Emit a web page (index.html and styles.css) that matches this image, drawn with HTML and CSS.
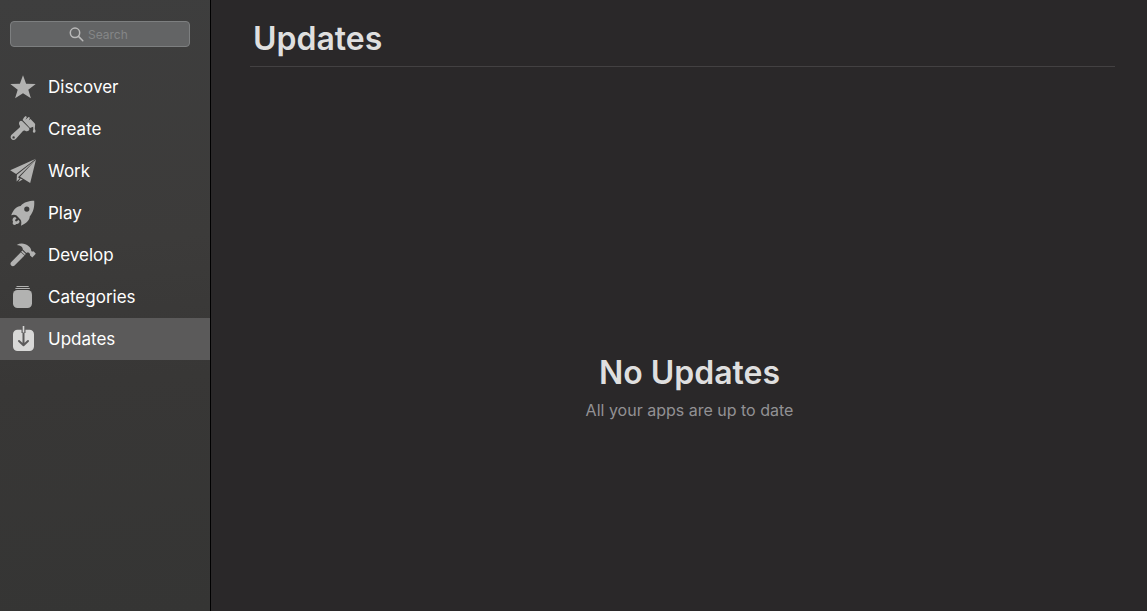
FILE: index.html
```html
<!DOCTYPE html>
<html lang="en">
<head>
<meta charset="utf-8">
<meta name="viewport" content="width=device-width, initial-scale=1">
<title>Updates</title>
<link rel="stylesheet" href="styles.css">
</head>
<body>
<div class="app">
  <aside class="sidebar">
    <label class="search">
      <svg class="search-icon" viewBox="0 0 15 15" aria-hidden="true"><circle cx="6" cy="5.800" r="4.700"/><path d="M9.500 9.400l4.300 4.300"/></svg>
      <input class="search-input" type="search" placeholder="Search" aria-label="Search">
    </label>
    <nav class="nav">
      <a class="nav-item" href="#discover">
        <svg class="nav-icon" viewBox="0 0 30 30" aria-hidden="true"><path d="M15 3.3l3.1 8.500 9.600.2-7.400 5.700 2.600 8.600-7.900-5.100-7.900 5.100 2.600-8.600L2.300 12l9.600-.2z"/></svg>
        Discover
      </a>
      <a class="nav-item" href="#create">
        <svg class="nav-icon" viewBox="0 0 30 30" aria-hidden="true"><path fill-rule="evenodd" d="M11.600 7.500c.7-.9 1.900-.9 2.700-.2l6.500 6.500c.8.8.8 2 0 2.800-1.100 1-2.500.9-3.600.2-.9-.5-1.800-.4-2.500.4l-6.900 7.700c-1.300 1.300-3.300 1.400-4.400.2s-1-3.100.2-4.300l7.800-7c.8-.8.8-1.600.3-2.400-.8-1.300-1-2.800-.1-3.900zM5.600 22.200a1.200 1.200 0 1 0 0 2.400 1.200 1.200 0 0 0 0-2.400z"/><path d="M14.600 6.100c.8-1.400 1-2.700 3.100-4l1.200.9-1.500 2.800L20.600 3l1.400.8-1.200 2.400 1.700-1.200 4.100 4.300c.8 1 .6 1.700.4 2.800l-.2 2.800c1 1.200 1.100 3.700-.5 3.800s-1.800-1.400-1-2.900l-.1-3.100-3.200 1.400z"/></svg>
        Create
      </a>
      <a class="nav-item" href="#work">
        <svg class="nav-icon" viewBox="0 0 30 30" aria-hidden="true"><path d="M27.900 2.800L2.200 14.300l5.900 3.600zM27 4.300L8.900 18.800l-.3 6.600 3.100-3-1.700-1.100zM28 3.500L12 20.800 22.200 27zM12.500 22.400l2.200 1.200-4.500 2.300z"/></svg>
        Work
      </a>
      <a class="nav-item" href="#play">
        <svg class="nav-icon" viewBox="0 0 30 30" aria-hidden="true"><path fill-rule="evenodd" d="M26.200 2.800c-5.500.1-10 1.200-13.600 5.200-3.700.1-7.200 3.500-9.400 9.300 2-.7 3.900-.7 5.400.2l3.800 3.900c1.100 1.700 1.200 3.900.5 6.300 5.500-2.600 8.900-5.700 8.800-9.300 4-4.500 4.900-9.700 4.500-15.600zM18.800 8.500a2.600 2.600 0 1 1 0 5.200 2.600 2.600 0 0 1 0-5.200z"/><path d="M7.100 19c-2.100.4-3.300 2.600-2 4.700-.8 1.100-.5 2.600.6 3.100 1.100.4 2-.1 2.300-.9 1.800.5 3.400-.5 3.600-2.600l-1.400-1.500c-.8 1.500-2.100 2.100-2.800 1.300s-.3-1.700 1.200-2.700z"/></svg>
        Play
      </a>
      <a class="nav-item" href="#develop">
        <svg class="nav-icon" viewBox="0 0 30 30" aria-hidden="true"><path d="M8.700 4.900C12.500 2.600 17 3 20.700 6.200c2.200 1.800 2.400 3 2.600 4.800.7.7 1.500.7 2.300.3l2.200 2.500-3.500 3.600-2.400-2.200c.3-1.200 0-1.800-1-2.500-1.100-.2-1.800-.1-2.600.4l-3.500-3.600c.2-2.300-1.700-4.300-6.100-4.600z"/><path d="M12.900 12.200l3.600 3.400-9.900 9.800c-1 1-2.400 1-3.400.1s-1-2.500.1-3.500z"/><path d="M14.300 10.600l3.600 3.500-1.100 1-3.600-3.400z"/></svg>
        Develop
      </a>
      <a class="nav-item" href="#categories">
        <svg class="nav-icon" viewBox="0 0 30 30" aria-hidden="true"><rect x="5" y="8" width="19" height="18" rx="4.500"/><path d="M8.500 4h12.200v.9H8.500zM7.400 5.900h14.400v1H7.400z"/></svg>
        Categories
      </a>
      <a class="nav-item nav-item-active" href="#updates" aria-current="page">
        <svg class="nav-icon" viewBox="0 0 30 30" aria-hidden="true"><path d="M9.500 5.700h4V9h4V5.700h4A4.500 4.500 0 0 1 26 10.200v12.300a4.500 4.500 0 0 1-4.500 4.500h-12A4.500 4.500 0 0 1 5 22.500V10.200a4.500 4.500 0 0 1 4.500-4.500z"/><path class="arrow" d="M15.500 9v11.800M11 17l4.500 4.300L20 17"/><path d="M14.700 2h1.600v6.500h-1.600z"/></svg>
        Updates
      </a>
    </nav>
  </aside>
  <main class="content">
    <h1 class="title">Updates</h1>
    <section class="empty">
      <h2 class="empty-title">No Updates</h2>
      <p class="empty-text">All your apps are up to date</p>
    </section>
  </main>
</div>
</body>
</html>
```
FILE: styles.css
```css
* {
  box-sizing: border-box;
}

body {
  margin: 0;
  background: #2a2829;
  color: #dfdfdf;
  font-family: Inter, "Liberation Sans", sans-serif;
}

.app {
  display: flex;
  min-height: 100vh;
}

.sidebar {
  flex: none;
  width: 211px;
  padding-top: 21px;
  border-right: 1px solid #000;
  background: linear-gradient(175deg, #3e3e3e 0%, #3c3b3a 40%, #383736 62%, #353534 100%);
}

.search {
  display: flex;
  align-items: center;
  gap: 4px;
  height: 26px;
  margin: 0 20px 19px 10px;
  padding-left: 58px;
  border: 1px solid #7d7f80;
  border-radius: 4px;
  background: #636465;
}

.search-icon {
  flex: none;
  width: 15px;
  height: 15px;
  fill: none;
  stroke: #b9b9b9;
  stroke-width: 1.5;
  stroke-linecap: round;
}

.search-input {
  flex: 1;
  width: 100%;
  min-width: 0;
  padding: 0;
  border: 0;
  outline: 0;
  background: none;
  color: #fff;
  font: 12px Inter, "Liberation Sans", sans-serif;
  appearance: none;
}

.search-input::placeholder {
  color: #858687;
}

.nav-item {
  display: flex;
  align-items: center;
  gap: 10px;
  height: 42px;
  padding-left: 8px;
  color: #fff;
  font-size: 17px;
  text-decoration: none;
}

.nav-item-active {
  background: #5b5a5a;
}

.nav-icon {
  flex: none;
  width: 30px;
  height: 30px;
  fill: #b2b2b1;
}

.nav-item-active .nav-icon {
  fill: #d8d8d7;
}

.nav-item-active .arrow {
  fill: none;
  stroke: #5b5a5a;
  stroke-width: 2;
  stroke-linecap: round;
  stroke-linejoin: round;
}

.content {
  display: flex;
  flex: 1;
  flex-direction: column;
  padding: 11px 32px 0 39px;
}

.title {
  margin: 0;
  padding: 8px 3px 7px;
  border-bottom: 1px solid #434142;
  font-size: 32px;
  font-weight: 600;
  line-height: 40px;
}

.empty {
  display: flex;
  flex: 1;
  flex-direction: column;
  align-items: center;
  justify-content: center;
  padding: 95px 0 0 14px;
  text-align: center;
}

.empty-title {
  margin: 0;
  font-size: 32px;
  font-weight: 600;
  line-height: 40px;
}

.empty-text {
  margin: 7px 0 0;
  color: #929194;
  font-size: 16px;
  line-height: 20px;
}
```
